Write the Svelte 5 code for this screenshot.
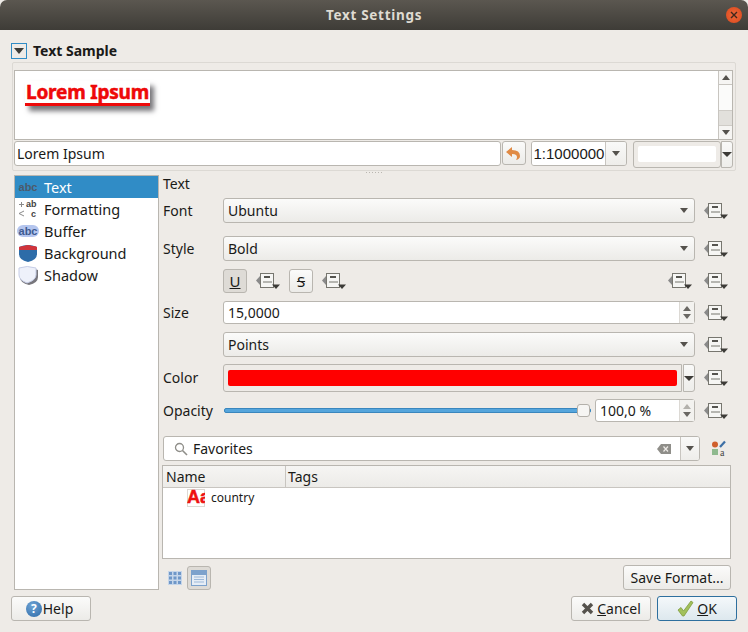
<script>
	const pages = ['Text', 'Formatting', 'Buffer', 'Background', 'Shadow']
</script>

{#snippet dd()}
	<svg class="dd" width="24" height="16" viewBox="0 0 24 16">
		<path d="M0 7.5 L4 3 V12 Z" fill="#8a8a8a"/>
		<rect x="4.5" y="0.5" width="13" height="14" fill="#f6f6f4" stroke="#77766f"/>
		<path d="M8 4 H14" stroke="#55544f" stroke-width="2"/>
		<path d="M7 9 H16" stroke="#77766f" stroke-width="1"/>
		<path d="M16 11.5 H24 L20 16 Z" fill="#3c3b37"/>
	</svg>
{/snippet}

{#snippet arrow()}
	<svg width="9" height="5" viewBox="0 0 9 5"><path d="M0 0 H8 L4 5 Z" fill="#55524d"/></svg>
{/snippet}

{#snippet spinArrows(faded)}
	<span class="spin">
		<svg width="9" height="5" viewBox="0 0 9 5"><path d="M0 5 H8 L4 0 Z" fill={faded ? '#b3b1ac' : '#6a6863'}/></svg>
		<svg width="9" height="5" viewBox="0 0 9 5"><path d="M0 0 H8 L4 5 Z" fill="#6a6863"/></svg>
	</span>
{/snippet}

{#snippet pageIcon(name)}
	{#if name === 'Text'}
		<span class="ico-abc">abc</span>
	{:else if name === 'Formatting'}
		<svg width="20" height="20" viewBox="0 0 20 20">
			<path d="M1 5.5 H6 M3.5 3 V8" stroke="#8a8a8a" stroke-width="1"/>
			<path d="M6 12 L1 14.5 L6 17" stroke="#8a8a8a" fill="none"/>
			<text x="8" y="8.2" class="ico-t">ab</text>
			<text x="13" y="18.3" class="ico-t">c</text>
		</svg>
	{:else if name === 'Buffer'}
		<span class="ico-abc buffer">abc</span>
	{:else if name === 'Background'}
		<svg width="20" height="20" viewBox="0 0 20 20">
			<path d="M1 4 Q10 0 19 4 V11 Q19 17 10 19 Q1 17 1 11 Z" fill="#2d6ca8"/>
			<path d="M1 4 Q5 2.5 6 3 Q10 1 14 3 Q17 2.5 19 4 V7 H1 Z" fill="#d0343c"/>
		</svg>
	{:else}
		<svg width="20" height="20" viewBox="0 0 20 20">
			<path d="M2 5 Q11 1 20 5 V12 Q20 18 11 20 Q2 18 2 12 Z" fill="#77767c"/>
			<path d="M1 3 Q9 0 18 3 V10 Q18 15 9 18 Q1 15 1 10 Z" fill="#eef1fa" stroke="#c6cde6"/>
		</svg>
	{/if}
{/snippet}

<div class="dialog">
	<header class="titlebar">
		<span class="title">Text Settings</span>
		<span class="close">
			<svg width="8" height="8" viewBox="0 0 8 8"><path d="M1 1 L7 7 M7 1 L1 7" stroke="#41271c" stroke-width="1.4"/></svg>
		</span>
	</header>

	<main class="content">
		<div class="group-head">
			<span class="collapse"><svg width="10" height="6" viewBox="0 0 10 6"><path d="M0 0 H10 L5 6 Z" fill="#3c3b37"/></svg></span>
			<b>Text Sample</b>
		</div>

		<section class="group">
			<div class="preview">
				<div class="canvas"><span class="lorem">Lorem Ipsum</span></div>
				<div class="vscroll">
					<span class="sbtn"><svg width="8" height="5" viewBox="0 0 8 5"><path d="M0 5 H8 L4 0 Z" fill="#55524d"/></svg></span>
					<span class="strack"></span>
					<span class="sthumb"></span>
					<span class="sbtn"><svg width="8" height="5" viewBox="0 0 8 5"><path d="M0 0 H8 L4 5 Z" fill="#55524d"/></svg></span>
				</div>
			</div>
			<div class="sample-row">
				<span class="field sample">Lorem Ipsum</span>
				<span class="btn reset">
					<svg width="15" height="13" viewBox="0 0 15 13"><path d="M0 5 L6 0 V3 Q14 3 14 9 Q14 12 10 13 Q12 10 10 8 Q9 7 6 7 V10 Z" fill="#e08a45"/></svg>
				</span>
				<span class="scale">
					<span class="scale-v">1:1000000</span>
					<span class="scale-d">{@render arrow()}</span>
				</span>
				<span class="colorbtn"><span class="swatch"></span></span>
				<span class="colordrop"><svg width="10" height="5" viewBox="0 0 10 5"><path d="M0 0 H10 L5 5 Z" fill="#3c3b37"/></svg></span>
			</div>
		</section>

		<div class="splitter"></div>

		<div class="split">
			<nav class="pages">
				{#each pages as p, i}
					<div class="page" class:sel={i === 0}>
						<span class="page-ico">{@render pageIcon(p)}</span>{p}
					</div>
				{/each}
			</nav>

			<div class="panel">
				<div class="panel-title">Text</div>

				<div class="row r-font">
					<label>Font</label>
					<span class="combo grow">Ubuntu {@render arrow()}</span>
					{@render dd()}
				</div>
				<div class="row r-style">
					<label>Style</label>
					<span class="combo grow">Bold {@render arrow()}</span>
					{@render dd()}
				</div>
				<div class="row r-deco">
					<label></label>
					<span class="toggle on"><u>U</u></span>
					{@render dd()}
					<span class="toggle strike"><s>S</s></span>
					{@render dd()}
					<span class="grow"></span>
					{@render dd()}
					<span class="gap3"></span>
					{@render dd()}
				</div>
				<div class="row r-size">
					<label>Size</label>
					<span class="field grow num">15,0000 {@render spinArrows(false)}</span>
					{@render dd()}
				</div>
				<div class="row r-units">
					<label></label>
					<span class="combo grow">Points {@render arrow()}</span>
					{@render dd()}
				</div>
				<div class="row r-color">
					<label>Color</label>
					<span class="colorfield grow"><span class="red"></span></span>
					<span class="colordrop tall"><svg width="10" height="5" viewBox="0 0 10 5"><path d="M0 0 H10 L5 5 Z" fill="#3c3b37"/></svg></span>
					{@render dd()}
				</div>
				<div class="row r-opacity">
					<label>Opacity</label>
					<span class="slider"><span class="knob"></span></span>
					<span class="field opacity num">100,0 % {@render spinArrows(true)}</span>
					{@render dd()}
				</div>

				<div class="search-row">
					<div class="search">
						<svg class="mag" width="14" height="14" viewBox="0 0 14 14"><circle cx="5.5" cy="5.5" r="4" fill="none" stroke="#8f8e89" stroke-width="1.3"/><path d="M8.5 8.5 L13 13" stroke="#8f8e89" stroke-width="1.6"/></svg>
						<span class="grow">Favorites</span>
						<svg class="clear" width="14" height="10" viewBox="0 0 14 10"><path d="M0 5 L4 0 H14 V10 H4 Z" fill="#8f8e89"/><path d="M6.5 2.5 L11 7.5 M11 2.5 L6.5 7.5" stroke="#eeebe7" stroke-width="1.2"/></svg>
						<span class="search-d">{@render arrow()}</span>
					</div>
					<svg class="style-ico" width="16" height="17" viewBox="0 0 16 17">
						<circle cx="4" cy="4.5" r="3" fill="#cf5f2c"/>
						<rect x="1" y="9" width="6" height="6" fill="#8fb98e"/>
						<path d="M9 7 L14 1.5" stroke="#3d6fa5" stroke-width="2.2"/>
						<text x="9" y="16" class="ico-a">a</text>
					</svg>
				</div>

				<div class="tree">
					<div class="tree-head">
						<span class="col-name">Name</span>
						<span>Tags</span>
					</div>
					<div class="tree-row">
						<svg class="thumb" width="18" height="18" viewBox="0 0 18 18">
							<rect x=".5" y=".5" width="17" height="17" fill="#fff" stroke="#dcd9d4"/>
							<text x="0" y="14" class="thumb-t">Aa</text>
						</svg>
						<span>country</span>
					</div>
				</div>

				<div class="tools">
					<span class="tool">
						<svg width="14" height="14" viewBox="0 0 14 14"><path d="M0 0 H14 V14 H0 Z" fill="#c6d6ea"/><path d="M1 1 h3 v3 h-3 z M5.5 1 h3 v3 h-3 z M10 1 h3 v3 h-3 z M1 5.5 h3 v3 h-3 z M5.5 5.5 h3 v3 h-3 z M10 5.5 h3 v3 h-3 z M1 10 h3 v3 h-3 z M5.5 10 h3 v3 h-3 z M10 10 h3 v3 h-3 z" fill="#6f97c8"/></svg>
					</span>
					<span class="tool on">
						<svg width="16" height="16" viewBox="0 0 16 16"><rect x=".5" y=".5" width="15" height="15" fill="#e6edf5" stroke="#7da2cc"/><path d="M1 1 H15 V5 H1 Z" fill="#7da2cc"/><path d="M3 7 H13 M3 9.5 H13 M3 12 H13" stroke="#9db9d9"/></svg>
					</span>
					<span class="grow"></span>
					<span class="btn save">Save Format...</span>
				</div>
			</div>
		</div>

		<footer class="footer">
			<span class="btn foot help">
				<span class="q">?</span>Help
			</span>
			<span class="grow"></span>
			<span class="btn foot">
				<svg width="13" height="13" viewBox="0 0 13 13"><path d="M2 2 L11 11 M11 2 L2 11" stroke="#55524d" stroke-width="3.4"/></svg>
				<span><u>C</u>ancel</span>
			</span>
			<span class="btn foot ok">
				<svg width="17" height="17" viewBox="0 0 17 17"><path d="M1 10 L4 7.5 L6.5 11 L14 1 L16 2.5 L7 16 H5.5 Z" fill="#a2c15c" stroke="#7f9c3e" stroke-width=".8"/></svg>
				<span><u>O</u>K</span>
			</span>
		</footer>
	</main>
</div>

<style>
:global(body) {
	margin:0;
}

.dialog {
	width:748px;
	height:632px;
	display:flex;
	flex-direction:column;
	overflow:hidden;
	background:#eeebe7;
	color:#1a1a18;
	font-family:"Noto Sans", "Liberation Sans", sans-serif;
	font-size:14px;
	line-height:20px;
}

.grow {
	flex:1;
}

.titlebar {
	height:30px;
	flex:none;
	display:flex;
	align-items:center;
	justify-content:center;
	position:relative;
	background:linear-gradient(#5b5750, #3e3c37);
	border-radius:7px 7px 0 0;
}

.title {
	color:#dfdbd2;
	font-weight:700;
	font-size:13.5px;
	letter-spacing:.7px;
}

.close {
	position:absolute;
	right:6px;
	top:7px;
	width:16px;
	height:16px;
	border-radius:50%;
	background:radial-gradient(#f0683a, #d9481c);
	display:flex;
	align-items:center;
	justify-content:center;
}

.content {
	flex:1;
	display:flex;
	flex-direction:column;
	padding:13px 11px 0;
	min-height:0;
}

.group-head {
	display:flex;
	align-items:center;
	gap:6px;
	height:16px;
	margin-bottom:3px;
}

.group-head b {
	font-size:14px;
}

.collapse {
	width:14px;
	height:14px;
	border:1px solid #308cc6;
	display:flex;
	align-items:center;
	justify-content:center;
}

.group {
	margin-left:1px;
	width:724px;
	height:109px;
	box-sizing:border-box;
	border:1px solid #dcd9d4;
	border-radius:2px;
	padding:7px 2px 0 1px;
}

.preview {
	height:70px;
	box-sizing:border-box;
	border:1px solid #b9b6b0;
	background:#fff;
	display:flex;
}

.canvas {
	flex:1;
	padding:10px 0 0 10px;
}

.lorem {
	display:inline-block;
	background:#fff;
	color:#ee0a0a;
	font-weight:700;
	font-size:19px;
	line-height:22px;
	height:22px;
	padding:0 1px;
	border-bottom:3px solid #ee0a0a;
	box-shadow:4px 5px 5px #77767a;
	-webkit-text-stroke:.5px #e00;
	letter-spacing:-.2px;
}

.vscroll {
	width:13px;
	border-left:1px solid #c8c5c0;
	display:flex;
	flex-direction:column;
}

.sbtn {
	height:13px;
	flex:none;
	display:flex;
	align-items:center;
	justify-content:center;
	background:#f6f5f3;
}

.sbtn:first-child {
	border-bottom:1px solid #c8c5c0;
}

.strack {
	flex:1;
	background:#fbfbfa;
}

.sthumb {
	height:14px;
	background:#e2e0dc;
	border-top:1px solid #cfccc7;
	border-bottom:1px solid #cfccc7;
}

.sample-row {
	display:flex;
	align-items:flex-start;
	margin-top:1px;
}

.field {
	box-sizing:border-box;
	border:1px solid #b9b6b0;
	border-radius:3px;
	background:#fff;
	display:flex;
	align-items:center;
	justify-content:space-between;
	padding-left:2px;
}

.sample {
	width:488px;
	height:25px;
}

.btn {
	box-sizing:border-box;
	border:1px solid #b9b6b0;
	border-radius:3px;
	background:linear-gradient(#fbfbfa, #ecebe8);
	display:flex;
	align-items:center;
	justify-content:center;
}

.reset {
	width:24px;
	height:24px;
	margin:0 5px 0 1px;
}

.scale {
	box-sizing:border-box;
	width:97px;
	height:25px;
	border:1px solid #b9b6b0;
	border-radius:3px;
	display:flex;
	overflow:hidden;
	margin-right:6px;
}

.scale-v {
	flex:1;
	background:#fff;
	padding-left:2px;
	font-family:"Liberation Sans", sans-serif;
	font-size:15px;
	line-height:23px;
}

.scale-d {
	width:20px;
	border-left:1px solid #c8c5c0;
	background:linear-gradient(#f9f9f8, #eeedea);
	display:flex;
	align-items:center;
	justify-content:center;
}

.colorbtn {
	box-sizing:border-box;
	width:88px;
	height:27px;
	border:1px solid #b9b6b0;
	border-radius:3px;
	padding:4px 4px;
	background:#eeebe7;
}

.swatch {
	display:block;
	height:16px;
	background:#fff;
	border-radius:2px;
}

.colordrop {
	box-sizing:border-box;
	width:12px;
	height:27px;
	border:1px solid #b9b6b0;
	border-radius:0 3px 3px 0;
	display:flex;
	align-items:center;
	justify-content:center;
	background:linear-gradient(#f9f9f8, #eeedea);
}

.colordrop.tall {
	height:28px;
}

.splitter {
	height:4px;
	flex:none;
	position:relative;
}

.splitter::after {
	content:'';
	position:absolute;
	left:355px;
	top:1px;
	width:16px;
	height:1px;
	background:repeating-linear-gradient(90deg, #b9b6b0 0 1px, transparent 1px 3px);
}

.split {
	display:flex;
	margin-left:3px;
	height:415px;
	flex:none;
}

.pages {
	box-sizing:border-box;
	width:145px;
	border:1px solid #b9b6b0;
	background:#fff;
	margin-right:3px;
	flex:none;
}

.page {
	height:22px;
	display:flex;
	align-items:center;
	font-size:14.5px;
	color:#1a1a18;
}

.page.sel {
	background:#308cc6;
	color:#fff;
}

.page-ico {
	width:20px;
	height:20px;
	margin:0 6px 0 3px;
	display:flex;
	align-items:center;
	justify-content:center;
}

.ico-abc {
	font:700 11px/12px "Liberation Sans", sans-serif;
	color:#4c5a6a;
}

.ico-abc.buffer {
	background:#b4c5ee;
	color:#3d5a90;
	border-radius:6px;
	padding:0 2px;
}

.ico-t {
	font:700 9px "Liberation Sans", sans-serif;
	fill:#444;
}

.ico-a {
	font:10px "Liberation Serif", serif;
	fill:#444;
}

.panel {
	flex:1;
	display:flex;
	flex-direction:column;
	margin-right:6px;
	min-width:0;
}

.panel-title {
	height:18px;
	margin-left:1px;
	line-height:18px;
}

.row {
	display:flex;
	align-items:center;
	margin-right:3px;
	margin-left:1px;
}

.row label {
	width:60px;
	flex:none;
}

.row .dd {
	flex:none;
	margin-left:9px;
}

.gap3 {
	width:3px;
	flex:none;
}

.combo {
	box-sizing:border-box;
	height:25px;
	border:1px solid #b9b6b0;
	border-radius:3px;
	background:linear-gradient(#fbfbfa, #ecebe8);
	display:flex;
	align-items:center;
	justify-content:space-between;
	padding:0 5px 0 4px;
}

.r-font { height:25px; margin-top:5px; }
.r-style { height:25px; margin-top:13px; }
.r-deco { height:24px; margin-top:8px; }
.r-size { height:23px; margin-top:8px; }
.r-units { height:25px; margin-top:8px; }
.r-color { height:28px; margin-top:7px; }
.r-opacity { height:23px; margin-top:7px; }

.toggle {
	box-sizing:border-box;
	width:24px;
	height:24px;
	border:1px solid #b9b6b0;
	border-radius:3px;
	background:linear-gradient(#fbfbfa, #ecebe8);
	display:flex;
	align-items:center;
	justify-content:center;
	flex:none;
	font-size:15px;
}

.toggle.on {
	background:#dedbd6;
}

.toggle.strike {
	margin-left:9px;
}

.num {
	height:23px;
	padding:0 0 0 4px;
}

.spin {
	box-sizing:border-box;
	width:15px;
	height:21px;
	border-left:1px solid #dcd9d4;
	background:#f3f2ef;
	display:flex;
	flex-direction:column;
	align-items:center;
	justify-content:center;
	gap:3px;
}

.colorfield {
	box-sizing:border-box;
	height:28px;
	border:1px solid #b9b6b0;
	border-radius:3px 0 0 3px;
	padding:5px 4px;
	margin-right:1px;
}

.red {
	display:block;
	height:16px;
	background:#f00;
	border-radius:2px;
}

.slider {
	flex:none;
	width:367px;
	height:5px;
	margin:0 4px 0 1px;
	background:#55a5dc;
	border:1px solid #3a86bd;
	box-sizing:border-box;
	border-radius:2px;
	position:relative;
}

.knob {
	position:absolute;
	right:0;
	top:-5px;
	width:13px;
	height:13px;
	box-sizing:border-box;
	border:1px solid #b3b0aa;
	border-radius:3px;
	background:#f6f5f3;
}

.opacity {
	width:100px;
	flex:none;
}

.search-row {
	display:flex;
	align-items:center;
	margin-top:14px;
	margin-left:1px;
}

.search {
	box-sizing:border-box;
	width:537px;
	height:25px;
	border:1px solid #b9b6b0;
	border-radius:3px;
	background:#fff;
	display:flex;
	align-items:center;
	overflow:hidden;
}

.mag {
	margin:0 5px 0 10px;
}

.clear {
	margin-right:9px;
}

.search-d {
	box-sizing:border-box;
	width:19px;
	height:100%;
	border-left:1px solid #c8c5c0;
	background:linear-gradient(#f9f9f8, #eeedea);
	display:flex;
	align-items:center;
	justify-content:center;
}

.style-ico {
	margin-left:11px;
}

.tree {
	box-sizing:border-box;
	margin-top:4px;
	height:94px;
	border:1px solid #b9b6b0;
	background:#fff;
}

.tree-head {
	display:flex;
	height:21px;
	background:linear-gradient(#f6f5f3, #ecebe8);
	border-bottom:1px solid #c8c5c0;
	padding-left:3px;
	line-height:21px;
}

.col-name {
	width:119px;
	border-right:1px solid #c8c5c0;
	margin-right:2px;
}

.tree-row {
	display:flex;
	align-items:center;
	height:20px;
	padding-left:24px;
	font-size:12px;
}

.thumb {
	margin-right:6px;
}

.thumb-t {
	font:700 18px "Liberation Sans", sans-serif;
	fill:#e11;
	stroke:#e11;
	stroke-width:.5px;
}

.tools {
	display:flex;
	align-items:center;
	margin-top:6px;
	height:25px;
	padding-left:1px;
}

.tool {
	box-sizing:border-box;
	width:24px;
	height:24px;
	display:flex;
	align-items:center;
	justify-content:center;
	border-radius:3px;
	border:1px solid transparent;
}

.tool.on {
	background:#dedbd6;
	border-color:#b9b6b0;
}

.save {
	width:108px;
	height:25px;
}

.footer {
	display:flex;
	margin-top:6px;
	gap:6px;
	height:25px;
}

.foot {
	width:80px;
	gap:3px;
}

.help {
	gap:1px;
	padding-right:3px;
}

.q {
	width:16px;
	height:16px;
	border-radius:50%;
	background:radial-gradient(circle at 40% 30%, #6fa3d4, #2c6aa8);
	color:#fff;
	font-size:12px;
	line-height:16px;
	font-weight:700;
	text-align:center;
}

.ok {
	border-color:#2e6f9e;
	background:linear-gradient(#f4f8fa, #dde8ee);
}
</style>
